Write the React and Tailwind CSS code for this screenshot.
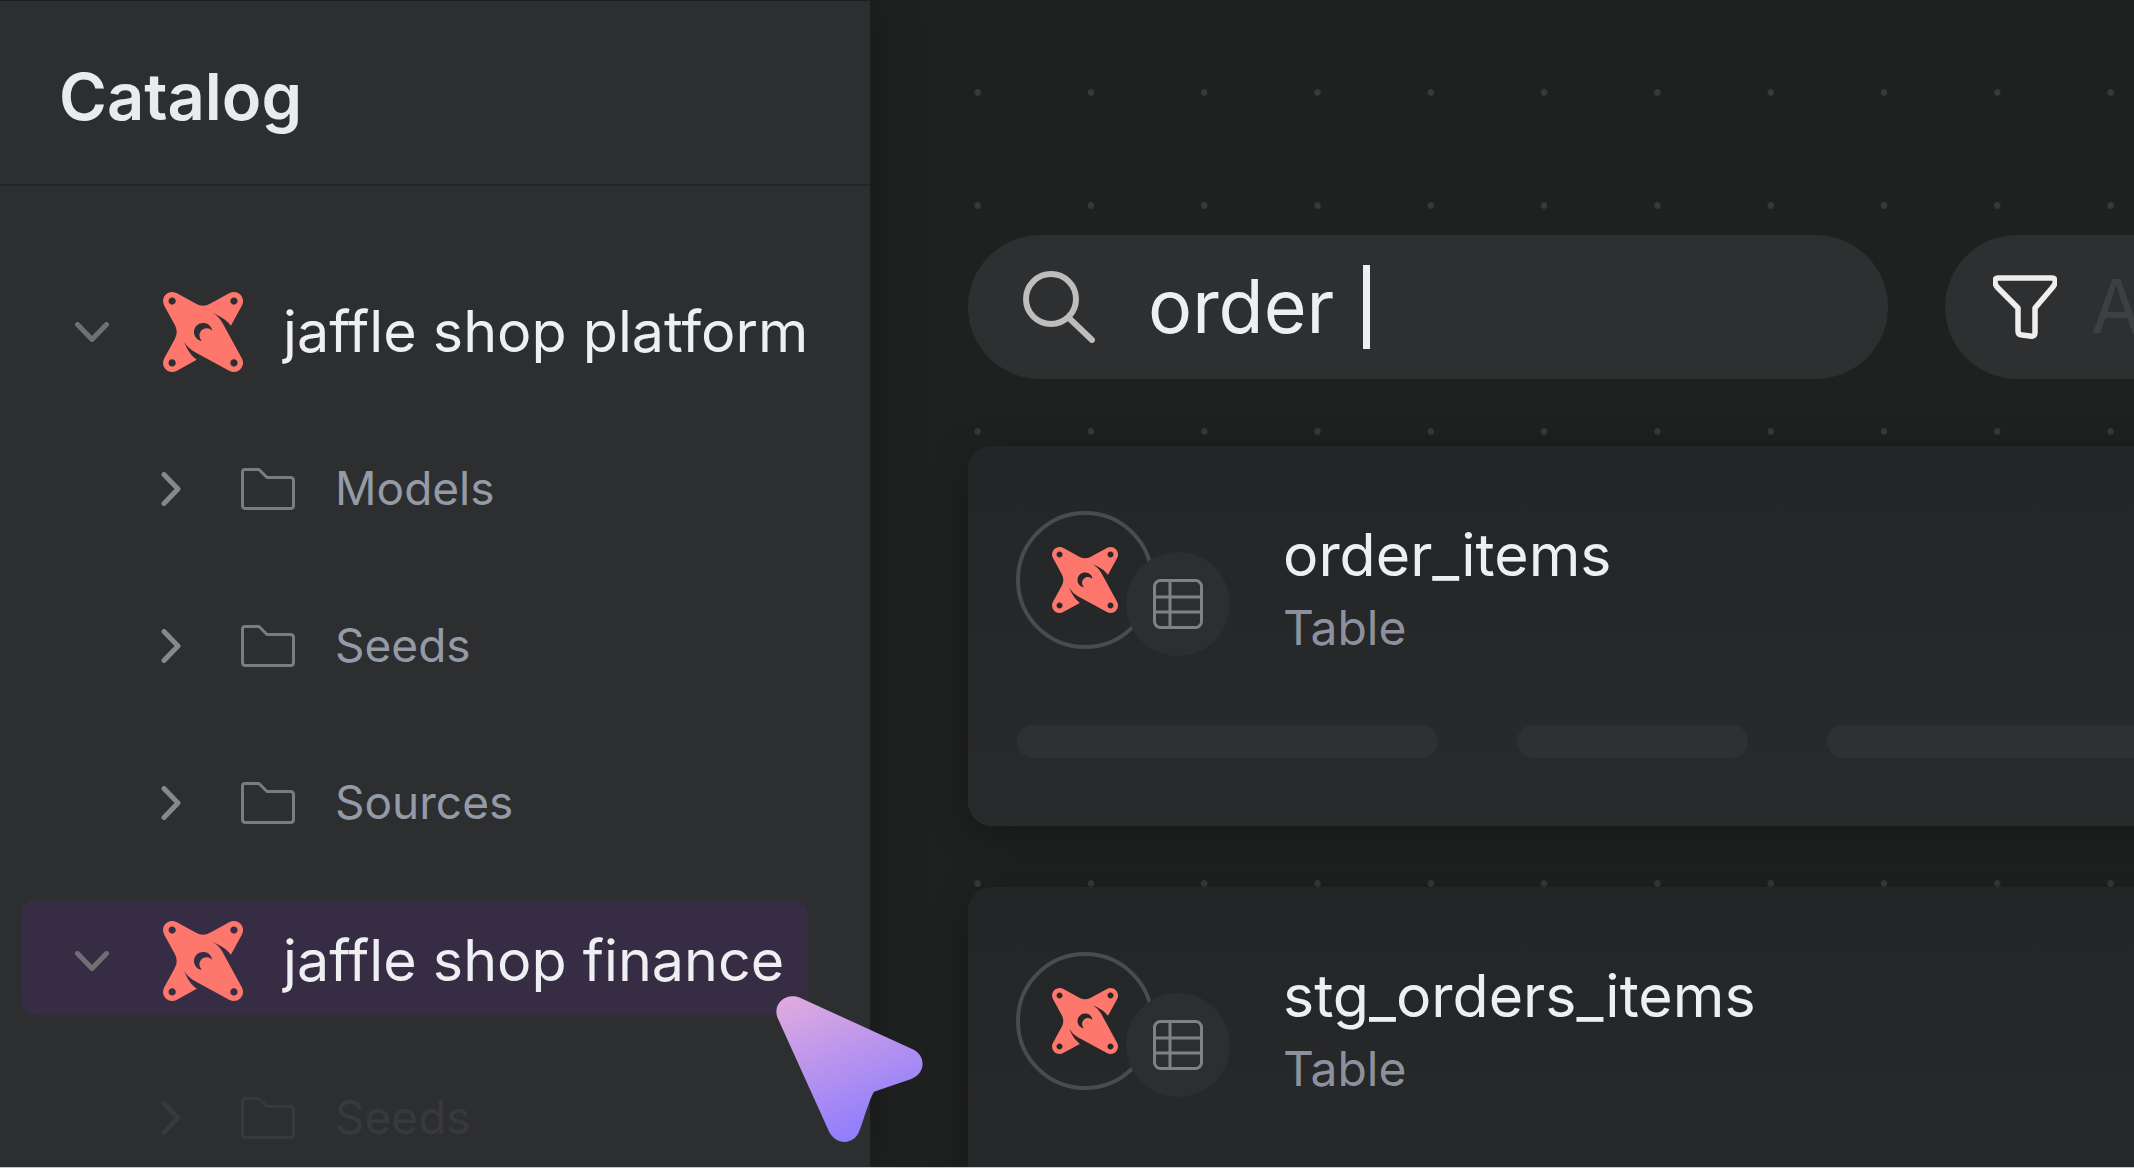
import React from "react";
import { SiDbt } from "react-icons/si";

const Chev = ({ down, className }) =>
  down ? (
    <svg viewBox="0 0 34 20" className={className} fill="none" stroke="currentColor" strokeWidth="5" strokeLinecap="round" strokeLinejoin="round">
      <path d="M2.5 2.5 L17 17.5 L31.5 2.5" />
    </svg>
  ) : (
    <svg viewBox="0 0 20 34" className={className} fill="none" stroke="currentColor" strokeWidth="5" strokeLinecap="round" strokeLinejoin="round">
      <path d="M3 2.5 L17 17 L3 31.5" />
    </svg>
  );

const Folder = ({ className }) => (
  <svg viewBox="0 0 54 42" className={className} fill="none" stroke="currentColor" strokeWidth="3" strokeLinejoin="round">
    <path d="M1.5 4 Q1.5 1.5 4 1.5 H18 L26 9.5 H49.5 Q52.5 9.5 52.5 12.5 V37.5 Q52.5 40.5 49.5 40.5 H4.5 Q1.5 40.5 1.5 37.5 Z" />
  </svg>
);

const TableIcon = () => (
  <svg viewBox="0 0 50 50" className="h-[50px] w-[50px] text-[#808183]" fill="none" stroke="currentColor" strokeWidth="3">
    <rect x="1.5" y="1.5" width="47" height="47" rx="6" />
    <path d="M1.5 18 H48.5 M1.5 33 H48.5 M17 1.5 V48.5" />
  </svg>
);

const ProjectRow = ({ label, active }) => (
  <div className="flex h-[157.25px] items-center">
    <div className={`ml-[21px] flex h-[116px] w-[787px] items-center rounded-2xl pl-[54px] ${active ? "mb-2 bg-[#362d45] pt-2" : ""}`}>
      <Chev down className="h-5 w-[34px] shrink-0 text-[#6f7076]" />
      <SiDbt className="ml-[54px] h-20 w-20 shrink-0 text-[#fd776d]" />
      <span className="ml-10 whitespace-nowrap text-[57.4px] leading-none text-[#eeeff3]">{label}</span>
    </div>
  </div>
);

const FolderRow = ({ label, faded }) => (
  <div className="flex h-[157.25px] items-center pl-[161px]">
    <Chev className={`h-[34px] w-5 ${faded ? "text-[#38393b]" : "text-[#86888e]"}`} />
    <Folder className={`ml-[60px] h-[42px] w-[54px] ${faded ? "text-[#38393b]" : "text-[#7a7c80]"}`} />
    <span className={`mb-[2px] ml-10 text-[46px] leading-none ${faded ? "text-[#38393b]" : "text-[#949aa6]"}`}>{label}</span>
  </div>
);

const Card = ({ name, children }) => (
  <div className="h-[380px] w-[1300px] shrink-0 rounded-3xl bg-linear-to-b from-[#242527] to-[#292a2c] pl-12 pt-[65px] shadow-[0_10px_40px_rgba(0,0,0,0.28)]">
    <div className="flex">
      <div className="relative h-[138px] w-[138px] shrink-0">
        <div className="flex h-full w-full items-center justify-center rounded-full border-4 border-[#4a4b4d]">
          <SiDbt className="h-[66px] w-[66px] text-[#fd776d]" />
        </div>
        <div className="absolute left-[110px] top-[41px] flex h-[104px] w-[104px] items-center justify-center rounded-full bg-[#2d2e30]">
          <TableIcon />
        </div>
      </div>
      <div className="ml-[129px] flex flex-col">
        <span className="mt-3 text-[59px] leading-[64px] text-[#eeeff3]">{name}</span>
        <span className="mt-[13px] text-[48px] leading-[56px] text-[#8d919d]">Table</span>
      </div>
    </div>
    {children}
  </div>
);

export default function App() {
  return (
    <div className="relative flex h-[1168px] w-[2134px] overflow-hidden border-b border-[#c8c8c8] bg-[#1f2020] font-['Inter',sans-serif]">
      <aside className="z-10 h-full w-[870px] shrink-0 border-t border-[#1e1f21] bg-[#2d2e30] shadow-[0_0_50px_rgba(0,0,0,0.3)]">
        <div className="flex h-[185px] items-center border-b-2 border-[#242527] pt-2 pl-[59px]">
          <h1 className="text-[65px] font-semibold leading-none text-[#eaebef]">Catalog</h1>
        </div>
        <div className="pt-[67px]">
          <ProjectRow label="jaffle shop platform" />
          <FolderRow label="Models" />
          <FolderRow label="Seeds" />
          <FolderRow label="Sources" />
          <ProjectRow label="jaffle shop finance" active />
          <FolderRow label="Seeds" faded />
        </div>
      </aside>

      <main className="h-full flex-1 overflow-hidden bg-[radial-gradient(circle,#38393b_3px,transparent_3.6px)] bg-[length:113.3px_113px] bg-[position:51px_36px] pl-[98px] pt-[235px]">
        <div className="flex gap-[57px]">
          <div className="flex h-[144px] w-[920px] shrink-0 items-center rounded-full bg-[#2e2f31] pl-[55px]">
            <svg viewBox="0 0 72 72" className="h-[72px] w-[72px] text-[#bdbdbd]" fill="none" stroke="currentColor" strokeWidth="6" strokeLinecap="round">
              <circle cx="28" cy="28" r="25" />
              <path d="M46 47 L69 69" />
            </svg>
            <span className="ml-[53px] text-[73.6px] leading-none text-[#eeeff3]">order</span>
            <span className="ml-[29px] h-[84px] w-[7px] bg-[#eeeff3]" />
          </div>
          <div className="flex h-[144px] w-[400px] shrink-0 items-center rounded-full bg-[#2e2f31] pl-[48px]">
            <svg viewBox="0 0 64 64" className="h-16 w-16 text-[#eeeeee]" fill="none" stroke="currentColor" strokeWidth="5.5" strokeLinejoin="round">
              <path d="M5 3 H59 Q63 3 62 8 Q61 11 59 13 L42 33 V58 Q42 62 37 61 L29 60 Q25 60 25 56 V33 L5 13 Q2 10 2 7 Q2 3 5 3 Z" />
            </svg>
            <span className="ml-[34px] text-[73.6px] leading-none text-[#3e3f41]">All</span>
          </div>
        </div>
        <div className="mt-[67px] flex flex-col gap-[61px]">
          <Card name="order_items">
            <div className="ml-px mt-[69px] flex gap-[79px]">
              <div className="h-[33px] w-[421px] rounded-full bg-[#2f3032]" />
              <div className="h-[33px] w-[231px] rounded-full bg-[#2f3032]" />
              <div className="h-[33px] w-[420px] rounded-full bg-[#2f3032]" />
            </div>
          </Card>
          <Card name="stg_orders_items" />
        </div>
      </main>

      <svg viewBox="0 0 600 624" className="absolute left-[740px] top-[960px] z-20 h-[208px] w-[200px]">
        <defs>
          <linearGradient id="cur" x1="150" y1="110" x2="330" y2="540" gradientUnits="userSpaceOnUse">
            <stop offset="0" stopColor="#e0aae0" />
            <stop offset="1" stopColor="#8f7dfc" />
          </linearGradient>
        </defs>
        <path fill="url(#cur)" d="M112 172 C98 130 138 96 180 113 L518 268 C560 288 556 340 516 356 L402 395 C392 410 380 450 360 508 C345 558 285 558 265 510 Z" />
      </svg>
    </div>
  );
}
